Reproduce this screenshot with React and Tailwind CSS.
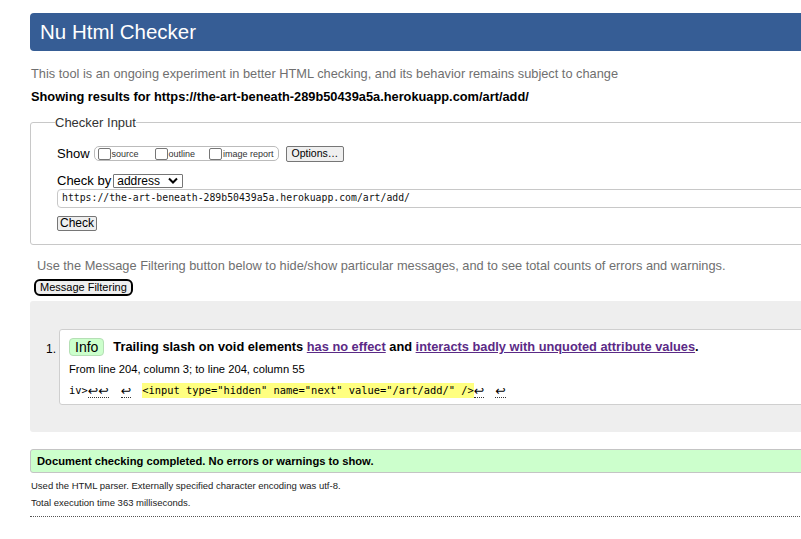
import React from 'react';

const sans = { fontFamily: '"Liberation Sans", Arial, sans-serif' };
const mono = { fontFamily: '"DejaVu Sans Mono", "Liberation Mono", monospace' };

function Ret({ n = 1, className = '' }) {
  return (
    <span
      className={`inline-block border-b border-dotted border-[#333] leading-[13px] text-[12.5px] ${className}`}
      style={{ fontFamily: '"DejaVu Sans", sans-serif' }}
    >
      {'↩'.repeat(n)}
    </span>
  );
}

function Box({ className = '' }) {
  return <span className={`shrink-0 w-[13px] h-[12px] border border-[#767676] rounded-[2px] bg-white ${className}`} />;
}

export default function App() {
  return (
    <div className="w-full h-[539px] overflow-hidden bg-white text-black" style={sans}>
      <div className="w-[840px] pl-[30px] pt-[13px]">
        {/* Title bar */}
        <div className="h-[38px] rounded-[4px] bg-[#365d95] pl-[10px] flex items-center">
          <h1 className="text-[20.5px] text-white leading-none">Nu Html Checker</h1>
        </div>

        <p className="mt-[15px] pl-[1px] text-[12.8px] leading-[16px] text-[#6f6f6f]">
          This tool is an ongoing experiment in better HTML checking, and its behavior remains subject to change
        </p>
        <p className="mt-[7px] pl-[1px] text-[12.8px] leading-[16px] font-bold">
          Showing results for https://the-art-beneath-289b50439a5a.herokuapp.com/art/add/
        </p>

        {/* Checker input fieldset */}
        <fieldset className="mt-[8px] border border-[#c8c8c8] rounded-[3px] pl-[26px] pb-[10px] pt-[11px]">
          <legend className="text-[13px] text-[#333] ml-[-2px]">Checker Input</legend>
          <div className="flex items-center text-[13px] h-[20px]">
            <span>Show</span>
            <div className="ml-[4px] h-[15px] border border-[#bbb] rounded-[5px] flex items-center pl-[3px] pr-[4px] text-[9px] text-[#333] whitespace-nowrap">
              <Box />
              <span className="ml-[1px] mt-[2px]">source</span>
              <Box className="ml-[16px]" />
              <span className="ml-[1px] mt-[2px]">outline</span>
              <Box className="ml-[14px]" />
              <span className="ml-[1px] mt-[2px]">image report</span>
            </div>
            <button className="ml-[7px] h-[16px] px-[5px] border border-[#767676] bg-[#efefef] rounded-[2px] text-[10.5px] leading-none">
              Options…
            </button>
          </div>
          <div className="flex items-center text-[13px] mt-[9px] h-[16px]">
            <span>Check by</span>
            <div className="ml-[2px] w-[70px] h-[14px] border border-[#767676] rounded-[1px] flex items-center justify-between pl-[3px] pr-[4px] text-[12px] leading-none">
              <span>address</span>
              <svg width="10" height="7" viewBox="0 0 10 7">
                <path d="M1 1.5 L5 5.5 L9 1.5" fill="none" stroke="#000" strokeWidth="2" />
              </svg>
            </div>
          </div>
          <div
            className="h-[19px] border border-[#c8c8c8] rounded-[4px] pl-[4px] flex items-center text-[9.8px] text-[#111]"
            style={mono}
          >
            https://the-art-beneath-289b50439a5a.herokuapp.com/art/add/
          </div>
          <button className="mt-[8px] h-[15px] w-[40px] border border-[#767676] bg-[#efefef] rounded-[2px] text-[12px] leading-none">
            Check
          </button>
        </fieldset>

        <p className="mt-[13px] pl-[7px] text-[12.8px] leading-[16px] text-[#6f6f6f]">
          Use the Message Filtering button below to hide/show particular messages, and to see total counts of errors and warnings.
        </p>
        <button className="mt-[5px] ml-[4px] h-[17px] px-[4px] border-2 border-black rounded-[6px] bg-[#efefef] text-[11px] leading-none">
          Message Filtering
        </button>

        {/* Results panel */}
        <div className="mt-[3px] bg-[#eeeeee] rounded-l-[3px] pt-[28px] pb-[27px] flex">
          <div className="w-[29px] pt-[11px] text-[12px] text-right pr-[3px]">1.</div>
          <div className="flex-1 bg-white border border-[#cfcfcf] rounded-l-[3px] pl-[9px] pt-[8px] pb-[6px]">
            <div className="flex items-center text-[12.8px] font-bold leading-[18px]">
              <span className="inline-block border border-[#b5dfb5] bg-[#ccffcc] rounded-[4px] px-[5px] h-[18px] text-[14px] font-normal leading-[17px]">
                Info
              </span>
              <span className="ml-[9px]">
                Trailing slash on void elements{' '}
                <span className="text-[#5b2a86] underline">has no effect</span> and{' '}
                <span className="text-[#5b2a86] underline">interacts badly with unquoted attribute values</span>.
              </span>
            </div>
            <div className="mt-[6px] text-[11.2px] leading-[14px]">From line 204, column 3; to line 204, column 55</div>
            <div className="mt-[7px] flex items-end text-[10.4px] leading-[15px] whitespace-pre" style={mono}>
              <span>iv&gt;</span>
              <Ret n={2} />
              <Ret className="ml-[12px]" />
              <span className="ml-[11px] bg-[#ffff80]">&lt;input type="hidden" name="next" value="/art/add/" /&gt;</span>
              <Ret />
              <Ret className="ml-[11px]" />
            </div>
          </div>
        </div>

        {/* Success */}
        <div className="mt-[17px] h-[24px] bg-[#ccffcc] border border-[#c4c4c4] rounded-l-[3px] pl-[6px] flex items-center text-[11.2px] font-bold">
          Document checking completed. No errors or warnings to show.
        </div>
        <p className="mt-[7px] pl-[1px] text-[9.5px] leading-[12px] text-[#222]">
          Used the HTML parser. Externally specified character encoding was utf-8.
        </p>
        <p className="mt-[5px] pl-[1px] text-[9.5px] leading-[12px] text-[#222]">Total execution time 363 milliseconds.</p>
        <div className="mt-[7px] border-t border-dotted border-[#555]" />
      </div>
    </div>
  );
}
